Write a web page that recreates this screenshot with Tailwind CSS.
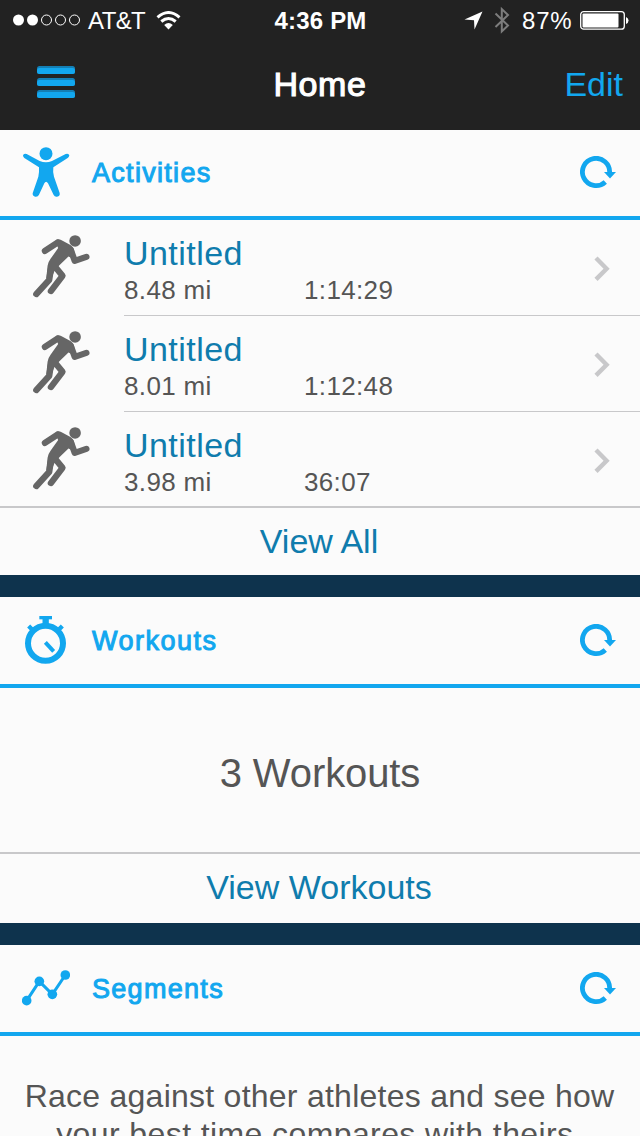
<!DOCTYPE html>
<html lang="en">
<head>
<meta charset="utf-8">
<title>Home</title>
<script src="https://cdn.jsdelivr.net/npm/@tailwindcss/browser@4"></script>
</head>
<body class="w-[640px] h-[1136px] overflow-hidden bg-[#fbfbfb] font-['Liberation_Sans',Arial,sans-serif] text-[#555]">
<svg class="hidden">
  <symbol id="refresh" viewBox="0 0 36 32"><path d="M25.3 25.9A13.6 13.6 0 1 1 29.6 17" fill="none" stroke="#12a7ef" stroke-width="4.8"/><path d="M24 16H36L30 22.6Z" fill="#12a7ef"/></symbol>
  <symbol id="chev" viewBox="0 0 16 26"><path d="M2 2L12.6 12.7L2 23.4" fill="none" stroke="#c8c8ca" stroke-width="4.4"/></symbol>
  <symbol id="runner" viewBox="90 310 190 200"><g fill="none" stroke="#666" stroke-width="19" stroke-linecap="round" stroke-linejoin="round"><path d="M135 363L173 338"/><path d="M213 360L225 393L260 381"/><path d="M165 410L188 438L153 484"/><path d="M155 405L148 450L109 493"/></g><path d="M168 330Q176 326 184 330L212 345Q224 353 224 368L216 384L206 380L178 407L163 425L157 440L139 446L143 408Q145 396 152 387L175 354L168 340Z" fill="#666"/><circle cx="226" cy="333" r="17.5" fill="#666"/></symbol>
</svg>
<header class="h-[130px] bg-[#222] text-white">
  <div class="h-10 flex items-center pl-[13px] pr-[11px] text-2xl leading-10 whitespace-nowrap">
    <div class="flex-1 flex items-center">
      <svg class="w-[68px] h-3 shrink-0" viewBox="0 0 68 12"><g fill="#fff"><circle cx="5.5" cy="6" r="5.5"/><circle cx="19.5" cy="6" r="5.5"/></g><g fill="none" stroke="#fff"><circle cx="33.500" cy="6" r="5"/><circle cx="47.500" cy="6" r="5"/><circle cx="61.500" cy="6" r="5"/></g></svg>
      <span class="ml-[7px] w-[68px] tracking-[-0.6px] pt-0.5">AT&amp;T</span>
      <svg class="w-[25px] h-[19px]" viewBox="0 0 25 19"><g fill="none" stroke="#fff" stroke-width="3"><path d="M1.500 6.300Q12.500 -3.200 23.500 6.300"/><path d="M5.300 10.500Q12.500 4.500 19.700 10.500"/></g><path d="M8.200 14Q12.500 9.800 16.800 14L12.500 18.500Z" fill="#fff"/></svg>
    </div>
    <span class="-ml-[1px] pt-0.5 font-bold tracking-[0.2px]">4:36 PM</span>
    <div class="flex-1 flex items-center justify-end">
      <svg class="w-[19px] h-[19px]" viewBox="0 0 19 19"><path d="M18.500 .5L10.500 18.500L10 9.200L.5 8.500Z" fill="#fff"/></svg>
      <svg class="ml-[11px] w-4 h-7" viewBox="0 0 16 28"><path d="M1.500 7.500L14 19.500L7.800 25.500V3L14 9L1.500 21" fill="none" stroke="#7d7d7d" stroke-width="2"/></svg>
      <span class="ml-3 tracking-[0.8px] w-[57px] pt-0.5">87%</span>
      <svg class="w-[50px] h-5" viewBox="0 0 50 20"><rect x="1.700" y="1.600" width="43.600" height="17.600" rx="3" fill="none" stroke="#fff" stroke-width="1.300"/><rect x="3.500" y="3.400" width="36" height="14" rx="1" fill="#fff"/><path d="M47 7Q49.500 8 49.500 10.500T47 14Z" fill="#fff"/></svg>
    </div>
  </div>
  <div class="h-[88px] flex items-center px-[17px] text-[34px] leading-[88px]">
    <div class="flex-1"><svg class="ml-5 w-[38px] h-8 -mt-1" viewBox="0 0 38 32"><g fill="#147fb5"><rect width="38" height="8" rx="2.5"/><rect y="12" width="38" height="8" rx="2.5"/><rect y="24" width="38" height="8" rx="2.5"/></g><g fill="#12a7ef"><rect y="2" width="38" height="6" rx="2.5"/><rect y="14" width="38" height="6" rx="2.5"/><rect y="26" width="38" height="6" rx="2.5"/></g></svg></div>
    <h1 class="tracking-[0.6px] [-webkit-text-stroke:1.1px_white]">Home</h1>
    <div class="flex-1 text-right text-[#12a7ef]">Edit</div>
  </div>
</header>

<section>
  <div class="h-[90px] border-b-4 border-[#12a7ef] flex items-center pl-[22px] pr-6">
    <svg class="w-12 h-[50px] -mt-0.5 shrink-0" viewBox="66 49 144 150"><circle cx="138" cy="69" r="19.5" fill="#12a7ef"/><path d="M69 74Q71 67 80 70L119 91Q138 99 156 91L197 70Q206 67 208 74Q207 80 203 82L160 110Q158 124 162 138L179 187Q181 197 171 198Q164 199 161 193L144 158Q138 149 133 158L117 192Q114 199 106 198Q97 197 98 188L115 138Q118 124 117 110L73 82Q69 79 69 74Z" fill="#12a7ef"/></svg>
    <h2 class="ml-[22px] flex-1 text-[27px] tracking-[1.3px] text-[#12a7ef] [-webkit-text-stroke:1px_#12a7ef]">Activities</h2>
    <svg class="w-9 h-8 -mt-0.5"><use href="#refresh"/></svg>
  </div>
  <div class="h-24 flex pl-[30px]">
    <svg class="mt-[13px] w-[63px] h-[67px] shrink-0"><use href="#runner"/></svg>
    <div class="ml-[31px] flex-1 flex items-center border-b border-[#c8c8ca] pt-0.5 pr-[30px]">
      <div class="flex-1"><div class="text-[34px] leading-[42px] tracking-[0.45px] text-[#0f7cad]">Untitled</div><div class="flex text-[26px] leading-8 tracking-[0.35px]"><span class="w-[180px]">8.48 mi</span><span>1:14:29</span></div></div>
      <svg class="w-4 h-[26px]"><use href="#chev"/></svg>
    </div>
  </div>
  <div class="h-24 flex pl-[30px]">
    <svg class="mt-[13px] w-[63px] h-[67px] shrink-0"><use href="#runner"/></svg>
    <div class="ml-[31px] flex-1 flex items-center border-b border-[#c8c8ca] pt-0.5 pr-[30px]">
      <div class="flex-1"><div class="text-[34px] leading-[42px] tracking-[0.45px] text-[#0f7cad]">Untitled</div><div class="flex text-[26px] leading-8 tracking-[0.35px]"><span class="w-[180px]">8.01 mi</span><span>1:12:48</span></div></div>
      <svg class="w-4 h-[26px]"><use href="#chev"/></svg>
    </div>
  </div>
  <div class="h-24 flex pl-[30px] border-b-2 border-[#c8c8ca]">
    <svg class="mt-[13px] w-[63px] h-[67px] shrink-0"><use href="#runner"/></svg>
    <div class="ml-[31px] h-[95px] flex-1 flex items-center pt-0.5 pr-[30px]">
      <div class="flex-1"><div class="text-[34px] leading-[42px] tracking-[0.45px] text-[#0f7cad]">Untitled</div><div class="flex text-[26px] leading-8 tracking-[0.35px]"><span class="w-[180px]">3.98 mi</span><span>36:07</span></div></div>
      <svg class="w-4 h-[26px]"><use href="#chev"/></svg>
    </div>
  </div>
  <div class="h-[67px] pr-0.5 text-center text-[34px] leading-[67px] text-[#0f7cad]">View All</div>
</section>
<div class="h-[22px] bg-[#0e334d]"></div>

<section>
  <div class="h-[91px] border-b-4 border-[#12a7ef] flex items-center pl-[22px] pr-6">
    <svg class="w-12 h-[50px] -mt-px shrink-0" viewBox="66 75 144 150"><g fill="none" stroke="#12a7ef"><circle cx="136.500" cy="160" r="52.500" stroke-width="18"/><path d="M136 157L161 184" stroke-width="12"/><path d="M86 108L100 122M187 108L173 122" stroke-width="13"/><path d="M118 83H156" stroke-width="10"/><path d="M137 80V104" stroke-width="19"/></g></svg>
    <h2 class="ml-[22px] pt-0.5 flex-1 text-[27px] tracking-[1.5px] text-[#12a7ef] [-webkit-text-stroke:1px_#12a7ef]">Workouts</h2>
    <svg class="w-9 h-8 -mt-px"><use href="#refresh"/></svg>
  </div>
  <div class="h-[166px] border-b-2 border-[#c8c8ca] text-center text-[40px] leading-[170px] tracking-[-0.1px]">3 Workouts</div>
  <div class="h-[69px] pr-0.5 text-center text-[34px] leading-[67px] text-[#0f7cad]">View Workouts</div>
</section>
<div class="h-[22px] bg-[#0e334d]"></div>

<section>
  <div class="h-[91px] border-b-4 border-[#12a7ef] flex items-center pl-[22px] pr-6">
    <svg class="w-12 h-9 -mt-px shrink-0" viewBox="66 88 144 108"><path d="M80 180L118 122L157 161L196 103" fill="none" stroke="#12a7ef" stroke-width="9"/><g fill="#12a7ef"><circle cx="80" cy="180" r="14.500"/><circle cx="118" cy="122" r="14.500"/><circle cx="157" cy="161" r="14.500"/><circle cx="196" cy="103" r="14.500"/></g></svg>
    <h2 class="ml-[22px] pt-0.5 flex-1 text-[27px] tracking-[1.3px] text-[#12a7ef] [-webkit-text-stroke:1px_#12a7ef]">Segments</h2>
    <svg class="w-9 h-8 -mt-px"><use href="#refresh"/></svg>
  </div>
  <p class="pt-[41px] pr-px text-center text-[32px] leading-[38px] tracking-[0.25px] whitespace-nowrap">Race against other athletes and see how<br><span class="tracking-[0.4px]">your best time compares with theirs.</span></p>
</section>
</body>
</html>
